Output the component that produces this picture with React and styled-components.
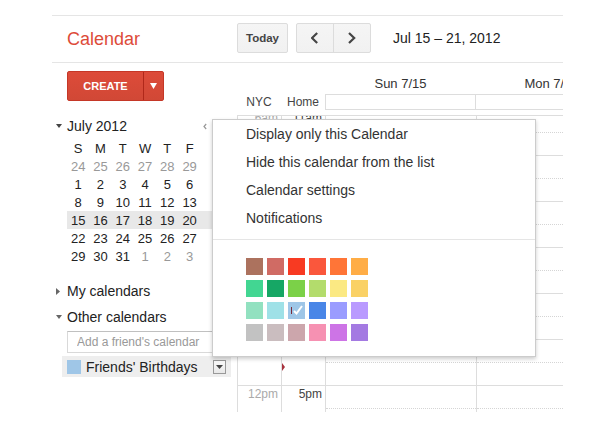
import React from 'react'
import styled, { createGlobalStyle } from 'styled-components'

const GlobalStyle = createGlobalStyle`
  body {
    margin: 0;
    background: #fff;
    font-family: 'Liberation Sans', Arial, sans-serif;
    color: #222;
  }
`

const palette = [
  ['#ac725e', '#d06b64', '#f83a22', '#fa573c', '#ff7537', '#ffad46'],
  ['#42d692', '#16a765', '#7bd148', '#b3dc6c', '#fbe983', '#fad165'],
  ['#92e1c0', '#9fe1e7', '#9fc6e7', '#4986e7', '#9a9cff', '#b99aff'],
  ['#c2c2c2', '#cabdbf', '#cca6ac', '#f691b2', '#cd74e6', '#a47ae2']
]

// Saturday column sits under the open menu, so only Sun-Fri are drawn
const weeks = [
  [[24, 1], [25, 1], [26, 1], [27, 1], [28, 1], [29, 1]],
  [[1], [2], [3], [4], [5], [6]],
  [[8], [9], [10], [11], [12], [13]],
  [[15], [16], [17], [18], [19], [20]],
  [[22], [23], [24], [25], [26], [27]],
  [[29], [30], [31], [1, 1], [2, 1], [3, 1]]
]

const hours = [
  ['6am', '11am'], ['7am', '12pm'], ['8am', '1pm'], ['9am', '2pm'],
  ['10am', '3pm'], ['11am', '4pm'], ['12pm', '5pm'], ['1pm', '6pm']
]

const menuItems = [
  'Display only this Calendar',
  'Hide this calendar from the list',
  'Calendar settings',
  'Notifications'
]

const Page = styled.div`
  position: relative;
  width: 511px;
  padding: 15px 0 0 52px;
`
const TopRule = styled.div`
  border-top: 1px solid #e5e5e5;
`
const Header = styled.header`
  display: flex;
  height: 46px;
  border-bottom: 1px solid #e5e5e5;
`
const Brand = styled.div`
  width: 185px;
  box-sizing: border-box;
  padding-left: 15px;
  display: flex;
  align-items: center;
  font-size: 18px;
  color: #dd4b39;
`
const Toolbar = styled.div`
  display: flex;
  align-items: flex-start;
  gap: 8px;
  padding-top: 7px;
`
const GrayButton = styled.div`
  width: ${({ $width }) => $width}px;
  height: 30px;
  box-sizing: border-box;
  display: flex;
  align-items: center;
  justify-content: center;
  background: linear-gradient(#f5f5f5, #f1f1f1);
  border: 1px solid #dcdcdc;
  border-radius: 2px;
  color: #444;
  font-size: 11.5px;
  font-weight: bold;
`
const NavGroup = styled.div`
  display: flex;
  height: 30px;
  box-sizing: border-box;
  background: linear-gradient(#f5f5f5, #f1f1f1);
  border: 1px solid #dcdcdc;
  border-radius: 2px;
`
const NavButton = styled.div`
  width: 36px;
  display: flex;
  align-items: center;
  justify-content: center;
  & + & {
    border-left: 1px solid #dcdcdc;
  }
`
const DateRange = styled.div`
  margin-left: 14px;
  line-height: 30px;
  font-size: 14px;
  color: #222;
`
const Body = styled.div`
  display: flex;
`
const Sidebar = styled.aside`
  width: 185px;
  flex-shrink: 0;
`
const CreateGroup = styled.div`
  display: flex;
  width: 97px;
  height: 30px;
  box-sizing: border-box;
  margin: 8px 0 0 15px;
  border: 1px solid #c53727;
  border-radius: 2px;
  background: linear-gradient(#dd4b39, #d14836);
  color: #fff;
`
const CreateMain = styled.div`
  width: 76px;
  box-sizing: border-box;
  border-right: 1px solid #b0281a;
  display: flex;
  align-items: center;
  justify-content: center;
  font-size: 11px;
  font-weight: bold;
`
const CreateArrow = styled.div`
  flex: 1;
  display: flex;
  align-items: center;
  justify-content: center;
`
const MiniHeader = styled.div`
  display: flex;
  align-items: center;
  width: 171px;
  height: 18px;
  margin-top: 16px;
  padding-left: 4px;
  font-size: 14px;
  color: #222;
`
const Twisty = styled.span`
  width: 11px;
  display: flex;
  align-items: center;
`
const MiniNav = styled.div`
  margin-left: auto;
  display: flex;
  gap: 8px;
  padding-right: 8px;
`
const MiniGrid = styled.div`
  width: 145px;
  margin-left: 15px;
  font-size: 13px;
`
const MiniRow = styled.div`
  display: grid;
  grid-template-columns: repeat(6, 22.3px);
  height: ${({ $head }) => ($head ? 17 : 18)}px;
  margin-top: ${({ $head }) => ($head ? 5 : 0)}px;
  align-items: center;
  background: ${({ $active }) => ($active ? '#e8e8e8' : 'transparent')};
`
const MiniCell = styled.span`
  text-align: center;
  color: ${({ $dim }) => ($dim ? '#999' : '#222')};
`
const CalToggle = styled.div`
  display: flex;
  align-items: center;
  height: 26px;
  padding-left: 4px;
  font-size: 14px;
  color: #222;
  margin-top: ${({ $first }) => ($first ? 13 : 0)}px;
`
const FriendInput = styled.input`
  display: block;
  width: 160px;
  height: 22px;
  box-sizing: border-box;
  margin: 1px 0 0 15px;
  padding: 0 0 0 9px;
  border: 1px solid #d9d9d9;
  border-top-color: #c0c0c0;
  font-family: inherit;
  font-size: 12px;
  outline: none;
  &::placeholder {
    color: #999;
  }
`
const CalItem = styled.div`
  display: flex;
  align-items: center;
  width: 169px;
  height: 21px;
  margin: 3px 0 0 10px;
  padding: 0 5px;
  box-sizing: border-box;
  background: #eee;
  font-size: 14px;
  color: #222;
`
const CalSwatch = styled.span`
  width: 14px;
  height: 14px;
  margin-right: 5px;
  background: ${({ $color }) => $color};
`
const ItemMenuButton = styled.span`
  margin-left: auto;
  width: 13px;
  height: 14px;
  box-sizing: border-box;
  border: 1px solid #999;
  background: linear-gradient(#fafafa, #e8e8e8);
  display: flex;
  align-items: center;
  justify-content: center;
`
const Main = styled.main`
  width: 326px;
  overflow: hidden;
`
const DayHeads = styled.div`
  display: flex;
  margin-top: 13px;
  padding-left: 88px;
  height: 16px;
`
const DayHead = styled.div`
  flex: 0 0 151px;
  text-align: center;
  font-size: 13px;
  line-height: 16px;
  color: #333;
`
const AllDayRow = styled.div`
  display: flex;
  margin-top: 2px;
  height: 16px;
`
const ZoneLabel = styled.div`
  flex: 0 0 44px;
  text-align: center;
  font-size: 12px;
  line-height: 16px;
  color: #444;
`
const AllDayCell = styled.div`
  flex: 0 0 151px;
  box-sizing: border-box;
  border: 1px solid #ddd;
  border-left: ${({ $first }) => ($first ? '1px solid #ddd' : 'none')};
`
const TimeGrid = styled.div`
  position: relative;
  height: 297px;
  box-sizing: border-box;
  margin-top: 5px;
  border-top: 1px solid #ddd;
  border-left: 1px solid #ddd;
  overflow: hidden;
`
const HourRows = styled.div`
  margin-top: -7px;
`
const HourRow = styled.div`
  display: grid;
  grid-template-columns: 44px 44px 151px 151px;
  height: 46px;
  box-sizing: border-box;
  border-top: 1px solid #ddd;
`
const TimeCell = styled.div`
  border-right: 1px solid #ddd;
  padding: 1px 3px 0 0;
  text-align: right;
  font-size: 12px;
  line-height: 14px;
  color: ${({ $muted }) => ($muted ? '#aaa' : '#444')};
`
const DayCell = styled.div`
  position: relative;
  border-right: 1px solid #ddd;
  &::after {
    content: '';
    position: absolute;
    left: 0;
    right: 0;
    top: 22px;
    border-top: 1px dotted #d5d5d5;
  }
`
const NowMarker = styled.span`
  position: absolute;
  left: 44px;
  top: 247px;
  border-left: 3px solid #a8323e;
  border-top: 4px solid transparent;
  border-bottom: 4px solid transparent;
`
const Menu = styled.div`
  position: absolute;
  left: 212px;
  top: 119px;
  width: 324px;
  box-sizing: border-box;
  padding-bottom: 15px;
  background: #fff;
  border: 1px solid rgba(0, 0, 0, 0.2);
  box-shadow: 0 2px 4px rgba(0, 0, 0, 0.2);
`
const MenuItem = styled.div`
  height: 28px;
  line-height: 28px;
  padding-left: 33px;
  font-size: 14px;
  color: #333;
`
const MenuSeparator = styled.div`
  margin-top: 7px;
  border-top: 1px solid #e5e5e5;
`
const SwatchGrid = styled.div`
  display: grid;
  grid-template-columns: repeat(6, 17px);
  grid-auto-rows: 17px;
  column-gap: 4px;
  row-gap: 5px;
  margin: 18px 0 0 33px;
`
const Swatch = styled.span`
  position: relative;
  background: ${({ $color }) => $color};
`
const SelectedSvg = styled.svg`
  position: absolute;
  inset: 0;
`

function Chevron ({ dir, size = 12, color = '#444', width = 2.2 }) {
  const w = size * 0.6
  const d = dir === 'left'
    ? `M${w - 1} 1 L1 ${size / 2} L${w - 1} ${size - 1}`
    : `M1 1 L${w - 1} ${size / 2} L1 ${size - 1}`
  return (
    <svg width={w} height={size} viewBox={`0 0 ${w} ${size}`}>
      <path d={d} fill='none' stroke={color} strokeWidth={width} />
    </svg>
  )
}

function Triangle ({ dir = 'down', color = '#444', w = 6, h = 4 }) {
  const points = dir === 'down'
    ? `0,0 ${w},0 ${w / 2},${h}`
    : `0,0 ${w},${h / 2} 0,${h}`
  return (
    <svg width={w} height={h} viewBox={`0 0 ${w} ${h}`}>
      <polygon points={points} fill={color} />
    </svg>
  )
}

function SelectedMark () {
  return (
    <SelectedSvg width='17' height='17' viewBox='0 0 17 17'>
      <rect x='3' y='5' width='1' height='7' fill='#7a2a3a' />
      <path d='M6 9 L8.5 11.5 L14 4' fill='none' stroke='#fff' strokeWidth='2' />
    </SelectedSvg>
  )
}

function MiniCalendar () {
  return (
    <>
      <MiniHeader>
        <Twisty><Triangle dir='down' w={6} h={4} /></Twisty>
        July 2012
        <MiniNav>
          <Chevron dir='left' size={7} color='#999' width={1.2} />
          <Chevron dir='right' size={7} color='#999' width={1.2} />
        </MiniNav>
      </MiniHeader>
      <MiniGrid>
        <MiniRow $head>
          {['S', 'M', 'T', 'W', 'T', 'F'].map((d, i) => (
            <MiniCell key={i}>{d}</MiniCell>
          ))}
        </MiniRow>
        {weeks.map((week, r) => (
          <MiniRow key={r} $active={r === 3}>
            {week.map(([n, dim], i) => (
              <MiniCell key={i} $dim={dim}>{n}</MiniCell>
            ))}
          </MiniRow>
        ))}
      </MiniGrid>
    </>
  )
}

function WeekGrid () {
  return (
    <Main>
      <DayHeads>
        <DayHead>Sun 7/15</DayHead>
        <DayHead>Mon 7/16</DayHead>
      </DayHeads>
      <AllDayRow>
        <ZoneLabel>NYC</ZoneLabel>
        <ZoneLabel>Home</ZoneLabel>
        <AllDayCell $first />
        <AllDayCell />
      </AllDayRow>
      <TimeGrid>
        <HourRows>
          {hours.map(([nyc, home]) => (
            <HourRow key={nyc}>
              <TimeCell $muted>{nyc}</TimeCell>
              <TimeCell>{home}</TimeCell>
              <DayCell />
              <DayCell />
            </HourRow>
          ))}
        </HourRows>
        <NowMarker />
      </TimeGrid>
    </Main>
  )
}

function CalendarMenu () {
  return (
    <Menu>
      {menuItems.map((label) => (
        <MenuItem key={label}>{label}</MenuItem>
      ))}
      <MenuSeparator />
      <SwatchGrid>
        {palette.flat().map((color, i) => (
          <Swatch key={i} $color={color}>
            {i === 14 && <SelectedMark />}
          </Swatch>
        ))}
      </SwatchGrid>
    </Menu>
  )
}

export default function App () {
  return (
    <Page>
      <GlobalStyle />
      <TopRule />
      <Header>
        <Brand>Calendar</Brand>
        <Toolbar>
          <GrayButton $width={51}>Today</GrayButton>
          <NavGroup>
            <NavButton><Chevron dir='left' /></NavButton>
            <NavButton><Chevron dir='right' /></NavButton>
          </NavGroup>
          <DateRange>Jul 15 – 21, 2012</DateRange>
        </Toolbar>
      </Header>
      <Body>
        <Sidebar>
          <CreateGroup>
            <CreateMain>CREATE</CreateMain>
            <CreateArrow><Triangle color='#fff' w={7} h={6} /></CreateArrow>
          </CreateGroup>
          <MiniCalendar />
          <CalToggle $first>
            <Twisty><Triangle dir='right' color='#666' w={4} h={7} /></Twisty>
            My calendars
          </CalToggle>
          <CalToggle>
            <Twisty><Triangle dir='down' color='#666' w={6} h={4} /></Twisty>
            Other calendars
          </CalToggle>
          <FriendInput placeholder="Add a friend's calendar" />
          <CalItem>
            <CalSwatch $color='#9fc6e7' />
            Friends' Birthdays
            <ItemMenuButton><Triangle dir='down' color='#444' w={7} h={4} /></ItemMenuButton>
          </CalItem>
        </Sidebar>
        <WeekGrid />
      </Body>
      <CalendarMenu />
    </Page>
  )
}
